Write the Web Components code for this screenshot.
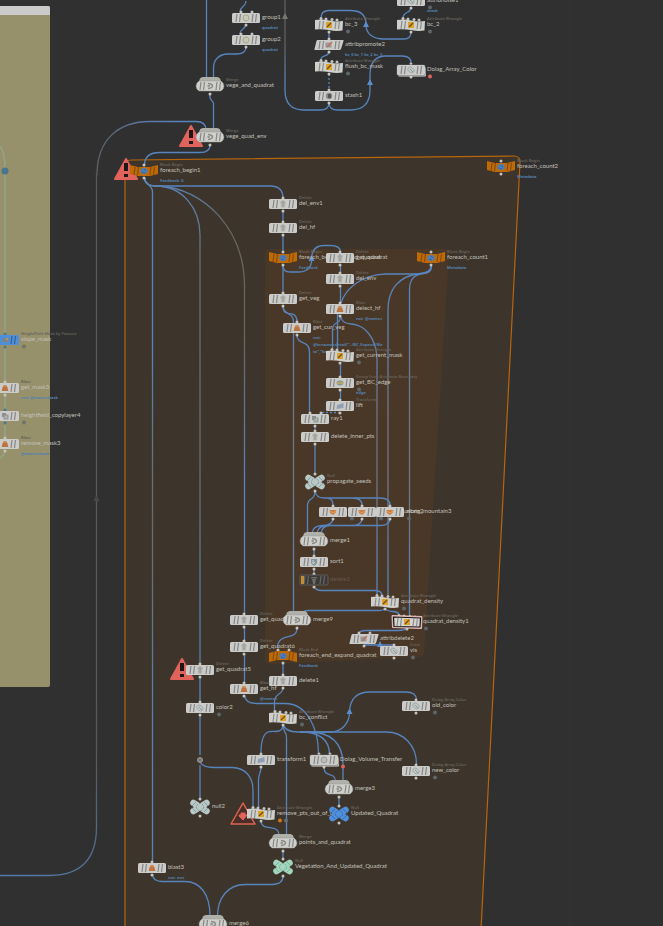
<!DOCTYPE html>
<html lang="en">
<head>
<meta charset="utf-8">
<title>Node graph</title>
<style>
html,body{margin:0;background:#303030}
</style>
</head>
<body>
<template id="canvas-tpl">
<style>
:host{display:block;position:relative;min-height:100vh;overflow:hidden;background:#303030;color:#bdbab4;font-family:"Noto Sans","Open Sans",sans-serif}
</style>
<slot></slot>
</template>

<template id="regions-tpl">
<style>
:host{position:absolute;inset:0}
svg{display:block;width:100%;height:100%}
</style>
<svg aria-hidden="true">
<path d="M569.5 0V926" stroke="#363636" stroke-dasharray="2 2"/>
<path d="M-5 6H48Q50 6 50 8V685Q50 687 48 687H-5Z" fill="#96916b"/>
<path d="M-5 6H48Q50 6 50 8V15H-5Z" fill="#cbcbcb"/>
<path d="M125 930V166Q125 160 131 160L514 156Q520 156 520 162L481 930Z" fill="#3d352b" stroke="#b8650c" stroke-width="1.2"/>
<path d="M265 253Q265 249 269 249H445Q449 249 449 254L424 653Q423 657 419 657L272 664Q265 664 265 659Z" fill="#493828"/>
</svg>
</template>

<template id="wires-tpl">
<style>
:host{position:absolute;inset:0}
svg{display:block;width:100%;height:100%}
.w{fill:none;stroke:#5884bd;stroke-width:1.3}
.t{fill:#5b8cce}
</style>
<svg aria-hidden="true">
<defs>
<linearGradient id="ga" gradientUnits="userSpaceOnUse" x1="0" y1="0" x2="0" y2="110"><stop offset="0" stop-color="#606060"/><stop offset=".4" stop-color="#606060"/><stop offset=".75" stop-color="#5884bd"/></linearGradient>
<linearGradient id="gb" gradientUnits="userSpaceOnUse" x1="206" y1="121" x2="97" y2="200"><stop offset=".15" stop-color="#5884bd"/><stop offset=".7" stop-color="#5e6672"/><stop offset="1" stop-color="#5c5c5c"/></linearGradient>
<linearGradient id="gc" gradientUnits="userSpaceOnUse" x1="97" y1="750" x2="30" y2="876"><stop offset="0" stop-color="#585858"/><stop offset="1" stop-color="#5478a8"/></linearGradient>
<linearGradient id="gd" gradientUnits="userSpaceOnUse" x1="0" y1="180" x2="0" y2="860"><stop offset="0" stop-color="#5884bd"/><stop offset=".25" stop-color="#5884bd"/><stop offset=".5" stop-color="#6b6a68"/><stop offset=".75" stop-color="#5b7fae"/><stop offset="1" stop-color="#5884bd"/></linearGradient>
<linearGradient id="ge" gradientUnits="userSpaceOnUse" x1="0" y1="180" x2="0" y2="664"><stop offset="0" stop-color="#5884bd"/><stop offset=".15" stop-color="#67707c"/><stop offset=".55" stop-color="#6b6a68"/><stop offset=".9" stop-color="#5a7ba6"/></linearGradient>
<linearGradient id="gf" gradientUnits="userSpaceOnUse" x1="0" y1="180" x2="0" y2="614"><stop offset="0" stop-color="#5884bd"/><stop offset=".1" stop-color="#67655f"/><stop offset=".35" stop-color="#67655f"/><stop offset=".7" stop-color="#5884bd"/></linearGradient>
<linearGradient id="gg" gradientUnits="userSpaceOnUse" x1="0" y1="310" x2="0" y2="600"><stop offset="0" stop-color="#5884bd"/><stop offset=".35" stop-color="#6d7684"/><stop offset=".6" stop-color="#6d7684"/><stop offset="1" stop-color="#5884bd"/></linearGradient>
</defs>
<g class="w">
<path d="M206.500 0V78"/><path d="M246 1C246 7 240 6 240 12M246 24C246 30 240 28 240 34"/>
<path d="M246 47Q246 54 236 54H228C219 54 213.500 60 213.500 68V78"/>
<path d="M210 94V98L213.500 103V130"/>
<path stroke="url(#ga)" d="M285 0V90Q285 110 304 110H320Q329 110 329 103"/>
<path d="M329 103Q329 110 338 110H350Q370 110 370 90V75Q370 56 386 56H402Q411 56 411 63"/>
<path d="M411 32Q411 39 404 39H384C372 39 366 33 366 25C366 14 360 10.500 350 10.500H329Q321 10.500 321 18"/>
<path d="M411 7C411 14 403 11 403 18M329 32V38M329 51C329 58 321 54 321 60"/>
<path d="M329 74V91" stroke-dasharray="2 2"/>
<path stroke="url(#gb)" d="M206 130Q206 121.500 196 121.500H150C118 121.500 97 140 97 175"/>
<path stroke="#5a5a5a" d="M96.500 174V700"/><path stroke="url(#gc)" d="M96.500 700V826Q97 875 50 875.500H0"/>
<path d="M210 145Q210 152.500 200 152.500H160Q144.500 152.500 144.500 165"/>
<path d="M144.500 178Q145 186 154 186H270Q283 186 283 198"/>
<path stroke="url(#gd)" d="M144.500 178C144.500 185 152.500 184 152.500 192V861"/>
<path stroke="url(#ge)" d="M144.500 178Q145 186 156 186C182 186 200 208 200 235V664"/>
<path stroke="url(#gf)" d="M144.500 178Q145 186 158 186C205 188 244 230 244.500 285V614"/>
<path d="M283 210V221M283 234V252M283 265V293"/>
<path d="M283 266Q283 272 290 272H298C307 272 311.500 268 311.500 260C311.500 250 316 245.500 324 245.500H330Q340.500 245.500 340.500 252"/>
<path d="M340.500 265V272M340.500 285V303"/>
<path d="M431.500 266C431.500 274 424 274 416 274H385C360 275 345 290 341 303"/>
<path stroke="url(#gg)" d="M431.500 266Q430 273 420 273.500C398 276 388 290 388 310V595"/>
<path stroke="url(#gg)" d="M431.500 266Q430 273 423 273.500C413 275 409.500 280 409.500 290V615"/>
<path stroke="url(#gg)" d="M340.500 316C342 325 350 323 357 325C370 329 377 345 377 360V595"/>
<path d="M340.500 316C340.500 326 332.500 320 332.500 330V349M337.500 314V349"/>
<path d="M283 306C283 315 289 313 292 314Q297 315 297 322"/>
<path stroke="url(#gg)" d="M283 306C283 315 293.500 312 293.500 322V612"/>
<path d="M297 335C297 346 309.500 339 309.500 352V413"/>
<path d="M340.500 362V376M340.500 389V400"/><path d="M340 412.500H321" stroke-dasharray="2 2"/>
<path d="M315 425V430M315 443V474"/>
<path d="M315 491Q316 498 324 498H328Q333 499 333 505M324 498H352Q362 498 362 505M350 498H380Q390 498 390 505"/>
<path d="M315 491C315 502 307.500 496 307.500 506V533"/>
<path d="M333 518Q333 525.500 322 525.500Q313 526 312 533M362 518Q362 525.500 352 525.500H327Q318 526 317 533M390 518Q390 525.500 380 525.500H330Q322 526 321 533"/>
<path d="M314 549V556M314 568V574M314 586Q315 590.500 322 590.500H375Q382 590.500 382 596"/>
<path d="M385 608Q385 610.500 378 610.500H308Q303 610.500 303 614M385 608C386 614 399 609 399 615"/>
<path d="M407 628Q405 630.500 398 630.500H366Q359 630.500 359 634M364 645H394"/>
<path d="M297 628C297 642 278 631 277.500 648M283 662V674M283 687C283 696 274.500 692 274.500 702V711"/>
<path d="M244.500 627V641M244.500 654V683M244.500 695Q245 703.500 257 703.500H285C308 703.500 318.500 730 318.500 754"/>
<path d="M200 677V702M200 715V755M200 765V798M200 762Q203 767.500 214 767.500H232C246 767.500 253 778 253 790V808"/>
<path d="M283 724C283 735 273 730 268 732Q261 735 261 753M283 724C283 734 286.500 730 286.500 738V836"/>
<path d="M283 724Q285 732 298 732H386C404 732 416.500 746 416.500 764"/>
<path d="M300 732H330C343 732 349.500 722 349.500 712C350 698 358 692 370 692H406Q416.500 692 416.500 700"/>
<path d="M300 732Q329 732 329.500 754M308 732Q343 732 343 765V782"/>
<path d="M261 767C261 775 258.500 772 258.500 780V808M324 767C324 779 335 770 335.500 782M339 797V805"/>
<path d="M261 821C262 833 279 822 279 836M283 850V860"/>
<path d="M152.500 874Q153 881.500 162 881.500H185C200 881.500 210 894 210 916M283 876Q283 884.500 272 884.500H245C228 884.500 217.500 898 217.500 916"/>
<path stroke="#91a989" d="M0 146Q5 152 5 170V334M5 346V383M5 394V410M5 422V438M5 450Q4 456 0 458"/>
</g>
<g class="t">
<path d="M366 21l3 6h-6zM370 79l3 6h-6zM311.500 255l3 6h-6zM380 641l3 6h-6zM349.500 708l3 6h-6z"/>
<path fill="#777" d="M285 13l3 6h-6z"/><path fill="#484848" d="M96.500 495l3 6h-6z"/>
<circle cx="5" cy="171" r="3.500" fill="#4a7590"/>
<circle cx="200" cy="760" r="2.500" fill="#777" stroke="#999"/>
</g>
</svg>
</template>

<template id="alert-tpl">
<style>
:host{position:absolute;width:0;height:0}
svg{position:absolute;left:-14px;top:-14px;width:28px;height:28px}
</style>
<svg viewBox="-14 -14 28 28" role="img" aria-label="Error"></svg>
</template>

<template id="node-tpl">
<style>
:host{position:absolute;width:0;height:0}
svg{position:absolute;left:-18px;top:-16px;width:36px;height:32px;overflow:visible}
.label{position:absolute;left:16px;top:-9px;display:grid;grid-template-rows:4px 7px auto;white-space:nowrap}
:host([kind^="null"]) .label{left:12px}
.type{font:600 4px/5px "Noto Sans",sans-serif;color:#68635c}
.name{font:6px/7px Lato,"Noto Sans",sans-serif;color:#c3c0ba}
.note{font:700 4px/7px "Noto Sans",sans-serif;color:#5480ae;padding-top:4px;white-space:pre}
:host([kind="off"]) .name{color:#65594e}
</style>
<svg viewBox="-18 -16 36 32" aria-hidden="true"></svg>
<div class="label"><span class="type"></span><span class="name"></span><span class="note"></span></div>
</template>

<graph-canvas>
<graph-regions></graph-regions>
<graph-wires></graph-wires>

<graph-node x="5" y="340" kind="blue" icon="terrain" dot="#707468" type="HeightField Mask by Feature" name="slope_mask"></graph-node>
<graph-node x="5" y="388" icon="blast" type="Blast" name="get_mask3" note="not: @name=mask"></graph-node>
<graph-node x="5" y="416" kind="teal" icon="copy" dot="#707468" name="heightfield_copylayer4"></graph-node>
<graph-node x="5" y="444" icon="blast" type="Blast" name="remove_mask3" note="@name=mask"></graph-node>

<graph-node x="246" y="18" ins="2" icon="group" name="group1" note="quadrat"></graph-node>
<graph-node x="246" y="40" ins="2" icon="group" name="group2" note="quadrat"></graph-node>
<graph-node x="210" y="86" kind="merge" icon="merge" type="Merge" name="vege_and_quadrat"></graph-node>
<graph-alert x="191" y="136"></graph-alert>
<graph-node x="210" y="137" kind="merge" icon="merge" type="Merge" name="vege_quad_env"></graph-node>
<graph-node x="329" y="25" kind="wrangle" ins="4" icon="wrangle" dot="#5d666a" type="Attribute Wrangle" name="bc_3"></graph-node>
<graph-node x="329" y="45" kind="slant" icon="promote" name="attribpromote2" note="bc_0 bc_1 bc_2 bc_3"></graph-node>
<graph-node x="329" y="67" kind="wrangle" ins="4" icon="wrangle" dot="#5d666a" type="Attribute Wrangle" name="flush_bc_mask"></graph-node>
<graph-node x="329" y="96" icon="stash" name="stash1"></graph-node>
<graph-node x="411" y="1" icon="color" dot="#5d666a" name="attribnoise1" note="mask"></graph-node>
<graph-node x="411" y="25" kind="wrangle" ins="4" icon="wrangle" dot="#5d666a" type="Attribute Wrangle" name="bc_2"></graph-node>
<graph-node x="411" y="70" kind="double" icon="color" dot="#e0635c" name="Dolag_Array_Color"></graph-node>

<graph-alert x="126" y="169"></graph-alert>
<graph-node x="144" y="171" kind="begin" icon="loop" type="Block Begin" name="foreach_begin1" note="Feedback: 0"></graph-node>
<graph-node x="501" y="167" kind="begin" icon="loop" type="Block Begin" name="foreach_count2" note="Metadata"></graph-node>
<graph-node x="283" y="204" icon="trash" type="Delete" name="del_env1"></graph-node>
<graph-node x="283" y="228" icon="trash" type="Delete" name="del_hf"></graph-node>
<graph-node x="283" y="258" kind="begin" icon="loop" type="Block Begin" name="foreach_begin_expand_quadrat" note="Feedback"></graph-node>
<graph-node x="340" y="258" icon="trash" type="Delete" name="get_quadrat"></graph-node>
<graph-node x="431" y="258" kind="begin" icon="loop" type="Block Begin" name="foreach_count1" note="Metadata"></graph-node>
<graph-node x="340" y="279" icon="trash" type="Delete" name="del_env"></graph-node>
<graph-node x="283" y="299" icon="trash" type="Delete" name="get_veg"></graph-node>
<graph-node x="340" y="309" icon="blast" type="Blast" name="delect_hf" note="not: @name="></graph-node>
<graph-node x="297" y="328" icon="blast" type="Blast" name="get_cur_veg" note="not:|@bcname=detail(&quot;../BC_Expand/Me|ta&quot;,&quot;bc"></graph-node>
<graph-node x="340" y="356" kind="wrangle" ins="4" icon="wrangle" dot="#5d666a" type="Attribute Wrangle" name="get_current_mask"></graph-node>
<graph-node x="340" y="383" icon="edge" dot="#5d666a" type="Group from Attribute Boundary" name="get_BC_edge" note="edge"></graph-node>
<graph-node x="340" y="406" icon="transform" type="Transform" name="lift"></graph-node>
<graph-node x="315" y="419" ins="2" icon="copy" name="ray1"></graph-node>
<graph-node x="315" y="437" icon="trash" name="delete_inner_pts"></graph-node>
<graph-node x="315" y="482" kind="null" type="Null" name="propagate_seeds"></graph-node>
<graph-node x="333" y="512" icon="mountain" dot="#5d666a" name="mountain1"></graph-node>
<graph-node x="362" y="512" icon="mountain" dot="#5d666a" name="along_mountain2"></graph-node>
<graph-node x="390" y="512" icon="mountain" dot="#5d666a" name="along_mountain3"></graph-node>
<graph-node x="314" y="541" kind="merge" icon="merge" name="merge1"></graph-node>
<graph-node x="314" y="562" icon="sort" name="sort1"></graph-node>
<graph-node x="314" y="580" kind="off" icon="bin" name="delete2"></graph-node>
<graph-node x="385" y="602" kind="wrangle" ins="4" icon="wrangle" dot="#5d666a" type="Attribute Wrangle" name="quadrat_density"></graph-node>
<graph-node x="407" y="622" kind="selected" ins="4" icon="wrangle" dot="#5d666a" type="Attribute Wrangle" name="quadrat_density1"></graph-node>
<graph-node x="244" y="620" icon="trash" type="Delete" name="get_quadrat4"></graph-node>
<graph-node x="297" y="620" kind="merge" icon="merge" name="merge9"></graph-node>
<graph-node x="283" y="656" kind="end" ins="2" icon="loop" type="Block End" name="foreach_end_expand_quadrat" note="Feedback"></graph-node>
<graph-node x="244" y="647" icon="trash" type="Delete" name="get_quadrat6"></graph-node>
<graph-node x="364" y="639" kind="slant" ins="2" icon="promote" name="attribdelete2"></graph-node>
<graph-node x="394" y="651" icon="color" dot="#5d666a" type="Color" name="vis"></graph-node>
<graph-node x="283" y="681" icon="trash" name="delete1"></graph-node>
<graph-alert x="182" y="669"></graph-alert>
<graph-node x="200" y="670" icon="trash" type="Delete" name="get_quadrat5"></graph-node>
<graph-node x="244" y="689" icon="blast" type="Blast" name="get_hf" note="@name="></graph-node>
<graph-node x="200" y="708" icon="color" dot="#5d666a" name="color2"></graph-node>
<graph-node x="283" y="718" kind="wrangle" ins="4" icon="wrangle" dot="#5d666a" type="Attribute Wrangle" name="bc_conflict"></graph-node>
<graph-node x="416" y="706" icon="color" dot="#5d666a" type="Dolag Array Color" name="old_color"></graph-node>
<graph-node x="416" y="771" icon="color" dot="#5d666a" type="Dolag Array Color" name="new_color"></graph-node>
<graph-node x="261" y="760" icon="transform" name="transform1"></graph-node>
<graph-node x="324" y="760" kind="double" ins="2" icon="ring" dot="#e0635c" name="Dolag_Volume_Transfer"></graph-node>
<graph-node x="339" y="789" kind="merge" icon="merge" name="merge3"></graph-node>
<graph-alert x="243" y="814" hollow></graph-alert>
<graph-node x="261" y="814" kind="wrangle" ins="4" icon="wrangle" dot="#c87a1c" dot2="#667078" type="Attribute Wrangle" name="remove_pts_out_of_bc"></graph-node>
<graph-node x="339" y="814" kind="null-blue" type="Null" name="Updated_Quadrat"></graph-node>
<graph-node x="200" y="807" kind="null" name="null2"></graph-node>
<graph-node x="283" y="843" kind="merge" icon="merge" type="Merge" name="points_and_quadrat"></graph-node>
<graph-node x="283" y="867" kind="null-green" type="Null" name="Vegetation_And_Updated_Quadrat"></graph-node>
<graph-node x="152" y="868" icon="blast" name="blast3" note="not: env"></graph-node>
<graph-node x="213" y="924" kind="merge" icon="merge" name="merge6"></graph-node>
</graph-canvas>

<script>
const stamp = (el, id) => {
  const root = el.attachShadow({ mode: 'open' });
  root.append(document.getElementById(id).content.cloneNode(true));
  return root;
};
const place = el => {
  el.style.left = el.getAttribute('x') + 'px';
  el.style.top = el.getAttribute('y') + 'px';
};

const ICONS = {
  trash: '<path d="M-2.500 -2H2.500L2 3.500H-2Z" fill="#b3b3b0"/><path d="M-2.500 -2H2.500M-1 -3H1M0 -1V3" stroke="#8e8e8b" stroke-width=".8" fill="none"/>',
  bin: '<path d="M-3 -3H3V-1.500H-3ZM-2 -1H2L1 4H-1Z" fill="#6d6a67"/>',
  blast: '<path d="M-3.500 3H3.500L1.500 -3H-1.500Z" fill="#c98a4a"/><path d="M-2.500 0H2.500M-3 2H3" stroke="#b05a38" stroke-width="1"/>',
  wrangle: '<rect x="-3" y="-3" width="6" height="6" fill="#dda22c"/><path d="M-2 2L2 -2" stroke="#6b4c1c" stroke-width="1.300"/>',
  merge: '<path d="M-2 -2.500Q2.500 -2 2.500 0Q2.500 2 -2 2.500M-2.500 0H0" stroke="#858885" stroke-width="1.400" fill="none"/>',
  group: '<circle r="3" fill="#c6c6ba" stroke="#aaa77c"/>',
  ring: '<circle r="3" fill="#bbb" stroke="#999"/>',
  promote: '<rect x="-3.500" y="-2.500" width="6" height="5" fill="#9a9a9a"/><path d="M-2 2L3 -3" stroke="#c46b52" stroke-width="1.200"/>',
  stash: '<circle r="3.200" fill="#8a8a88"/><path d="M-1 -2H2V2H-1Z" fill="#555"/>',
  color: '<ellipse rx="3.500" ry="2.500" transform="rotate(35)" fill="#c1c8c7" stroke="#9aa5a4" stroke-width=".8"/><path d="M-1 -1L2 2" stroke="#879a9a"/>',
  loop: '<ellipse rx="3.800" ry="3" fill="#4b7cb8"/><path d="M-2 1L1 2M0 -2L2 0" stroke="#345d8e" stroke-width=".8"/>',
  edge: '<ellipse rx="3.500" ry="2.400" fill="#8a959a"/><path d="M-3 0H3" stroke="#c9b14d" stroke-width="1.400"/>',
  transform: '<path d="M-3.500 3L-3 -1L0 -2L3.500 -3V2Z" fill="#8e9fb6"/>',
  copy: '<rect x="-3" y="-3" width="4" height="4" fill="#8a9090"/><rect x="-1" y="-1" width="4" height="4" fill="#aab4b0" stroke="#888" stroke-width=".8"/>',
  mountain: '<path d="M-3.500 -2H3.500L2.500 1L0 3L-3 1Z" fill="#cf7b3c"/><path d="M-3 -1L0 1L3 -1" stroke="#e0a25c" fill="none"/>',
  sort: '<path d="M-3 -3H3V1Q2 3 0 4Q-2 3 -3 1Z" fill="#84949b"/><path d="M-1 -2V2L1 0" stroke="#c4d6dc" fill="none"/>',
  terrain: '<path d="M-4 2L-1 -2L3 -1L4 2Z" fill="#79838a"/><circle cx="2" cy="-1" r="1.300" fill="#c98c4a"/>'
};
const stripes = c => `<path d="M-10 4L-9 -4M-6.500 4L-5.500 -4M6 4L7 -4M9.500 4L10.500 -4" stroke="${c}" stroke-width="1.200"/>`;
const bar = (fill, line, extra = '') => `<rect x="-14" y="-5" width="28" height="10" rx="1.500" fill="${fill}" ${extra}/>` + stripes(line);
const wave = '<path d="M-14 -5Q-6 -6 0 -4.500Q7 -3 14 -4L13.500 5.500Q7 6.500 0 5Q-7 4 -14 4.500Z" fill="#cfcfcc"/>' + stripes('#8c8c8c');
const cross = (a, b) => `<g stroke="${a}" stroke-width="6.500" stroke-linecap="round"><path d="M-6.500 -4L6.500 4M6.500 -4L-6.500 4"/></g><circle r="3.500" fill="${a}" stroke="${b}" stroke-width=".8" stroke-dasharray="2 1"/><path d="M-8 -1L-4 -5M8 -1L4 -5M-8 1L-4 5M8 1L4 5" stroke="${b}" stroke-width=".7"/>`;
const BODIES = {
  bar: () => bar('#cbcbc9', '#868684'),
  blue: () => bar('#4f8fd8', '#35608f'),
  teal: () => bar('#cbcbc9', '#868684'),
  off: () => bar('#3b3a38', '#686764', 'stroke="#686562" stroke-width=".8"') + '<rect x="-13" y="-4" width="3" height="8" fill="#c08e33"/>',
  double: () => '<rect x="-13" y="-3" width="28" height="9.500" rx="1.500" fill="#e2e2e0"/><rect x="-14.500" y="-5.500" width="29" height="11" rx="1.500" fill="#555"/>' + bar('#cbcbc9', '#868684'),
  slant: () => '<path d="M-11.500 -5H14Q15 -5 14.500 -4L12 4Q11.500 5 10.500 5H-14Q-15 5 -14.500 4L-12.500 -4Q-12 -5 -11.500 -5Z" fill="#cbcbc9"/>' + stripes('#868684'),
  wrangle: () => wave,
  selected: () => '<path d="M-15 -6.500L15 -5.500L14.500 6.500L-14.500 5.500Z" fill="#e3bdb8" stroke="#e3bdb8" stroke-linejoin="round"/><path d="M-13.500 -5L13.500 -4L13 5L-13 4.500Z" fill="#d5d5d2" stroke="#161412" stroke-width="1.200"/>' + stripes('#8c8c8c'),
  merge: () => '<path d="M-11 -3Q-11 -9 -7 -9H7Q11 -9 11 -3Z" fill="#b0b0aa"/><path d="M-11 -5H11Q14 -3 14 0Q14 3 11 5H-11Q-14 3 -14 0Q-14 -3 -11 -5Z" fill="#cfcfcc" stroke="#999994" stroke-width=".5"/>' + stripes('#868684'),
  begin: () => '<path d="M-14 -6L-6 -4H6L14 -6V3L6 5H-6L-14 3Z" fill="#c06a06"/>' + stripes('#854d09'),
  end: () => '<path d="M-14 -3L-6 -5H6L14 -3V6L6 4H-6L-14 6Z" fill="#c06a06"/>' + stripes('#854d09'),
  'null': () => cross('#b8c8c6', '#74898b'),
  'null-blue': () => cross('#4f8fdc', '#2e5f9f'),
  'null-green': () => cross('#a2d6bd', '#6b9f8a')
};

customElements.define('graph-canvas', class extends HTMLElement {
  constructor() { super(); stamp(this, 'canvas-tpl'); }
});
customElements.define('graph-regions', class extends HTMLElement {
  constructor() { super(); stamp(this, 'regions-tpl'); }
});
customElements.define('graph-wires', class extends HTMLElement {
  constructor() { super(); stamp(this, 'wires-tpl'); }
});
customElements.define('graph-alert', class extends HTMLElement {
  connectedCallback() {
    if (this.shadowRoot) return;
    place(this);
    stamp(this, 'alert-tpl').querySelector('svg').innerHTML = this.hasAttribute('hollow')
      ? '<path d="M0 -11L12 10H-12Z" fill="#4a2f28" stroke="#dd6450" stroke-width="1.500" stroke-linejoin="round"/><path d="M-2 -1H2V1H4L0 6L-4 2V1H-2Z" fill="#e0635c" stroke="#e0635c"/>'
      : '<path d="M0 -10L11 10H-11Z" fill="#e0635c" stroke="#e0635c" stroke-width="2" stroke-linejoin="round"/><path d="M-2 -6H2V2H-2ZM-2 5H2V8H-2Z" fill="#1d1616"/>';
  }
});
customElements.define('graph-node', class extends HTMLElement {
  connectedCallback() {
    if (this.shadowRoot) return;
    place(this);
    const get = n => this.getAttribute(n) || '';
    const root = stamp(this, 'node-tpl');
    const kind = get('kind') || 'bar';
    const isNull = kind.startsWith('null');
    const port = (x, y) => `<circle cx="${x}" cy="${y}" r="1.500" fill="${kind === 'blue' || kind === 'teal' ? '#4a7a86' : '#c4c4c0'}"/>`;
    const ins = kind === 'merge' ? [] : { 4: [-8, -3, 3, 8], 2: [-5, 6] }[get('ins')] || [0];
    let art = ins.map((x, i) => port(x, isNull ? -8 : ins.length === 4 ? -6.5 + i / 2 : -6)).join('');
    art += port(0, isNull ? 9 : kind === 'merge' ? 8 : 7);
    art += BODIES[kind]() + (ICONS[get('icon')] || '');
    if (get('dot')) art += `<circle cx="19" cy="6.500" r="2" fill="${get('dot')}"/>`;
    if (get('dot2')) art += `<circle cx="25" cy="6.500" r="2" fill="${get('dot2')}"/>`;
    root.querySelector('svg').innerHTML = art;
    root.querySelector('.type').textContent = get('type');
    root.querySelector('.name').textContent = get('name');
    root.querySelector('.note').textContent = get('note').replaceAll('|', '\n');
  }
});
</script>
</body>
</html>
